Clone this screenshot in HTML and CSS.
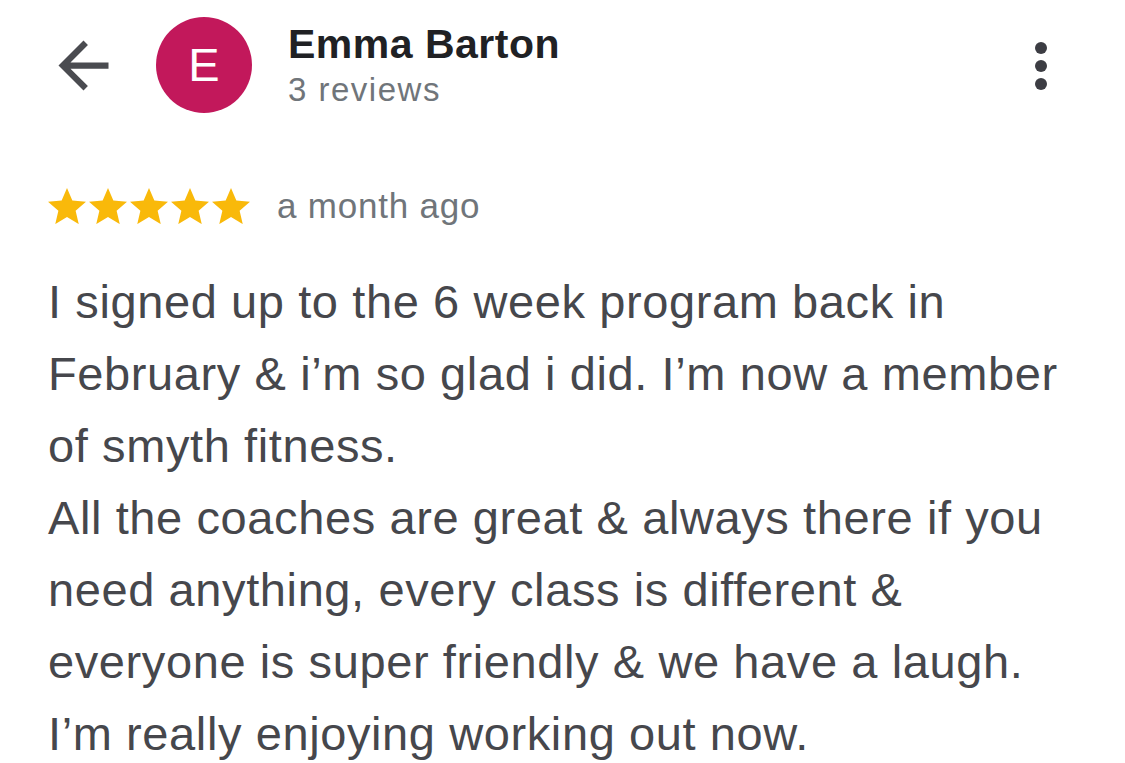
FILE: index.html
```html
<!DOCTYPE html>
<html lang="en">
<head>
<meta charset="utf-8">
<title>Emma Barton review</title>
<link rel="stylesheet" href="styles.css">
</head>
<body>
<main class="screen">
  <header class="header">
    <svg class="back" viewBox="0 0 24 24" aria-label="Back"><path d="M20 11H7.83l5.59-5.59L12 4l-8 8 8 8 1.41-1.41L7.83 13H20v-2z"/></svg>
    <div class="avatar">E</div>
    <div class="who">
      <div class="name">Emma Barton</div>
      <div class="count">3 reviews</div>
    </div>
    <div class="kebab" aria-label="More"><span></span><span></span><span></span></div>
  </header>
  <div class="meta">
    <div class="stars">
      <svg viewBox="2 2 20 19.27"><path d="M12 17.27L18.18 21l-1.64-7.03L22 9.24l-7.19-.61L12 2 9.19 8.63 2 9.24l5.46 4.73L5.82 21z"/></svg>
      <svg viewBox="2 2 20 19.27"><path d="M12 17.27L18.18 21l-1.64-7.03L22 9.24l-7.19-.61L12 2 9.19 8.63 2 9.24l5.46 4.73L5.82 21z"/></svg>
      <svg viewBox="2 2 20 19.27"><path d="M12 17.27L18.18 21l-1.64-7.03L22 9.24l-7.19-.61L12 2 9.19 8.63 2 9.24l5.46 4.73L5.82 21z"/></svg>
      <svg viewBox="2 2 20 19.27"><path d="M12 17.27L18.18 21l-1.64-7.03L22 9.24l-7.19-.61L12 2 9.19 8.63 2 9.24l5.46 4.73L5.82 21z"/></svg>
      <svg viewBox="2 2 20 19.27"><path d="M12 17.27L18.18 21l-1.64-7.03L22 9.24l-7.19-.61L12 2 9.19 8.63 2 9.24l5.46 4.73L5.82 21z"/></svg>
    </div>
    <span class="time">a month ago</span>
  </div>
  <p class="body">I signed up to the 6 week program back in February &amp; i’m so glad i did. I’m now a member of smyth fitness.<br>All the coaches are great &amp; always there if you need anything, every class is different &amp; everyone is super friendly &amp; we have a laugh. I’m really enjoying working out now.</p>
</main>
</body>
</html>
```

FILE: styles.css
```css
html, body {
  margin: 0;
  padding: 0;
  background: #ffffff;
}

body {
  font-family: "Liberation Sans", Arial, Helvetica, sans-serif;
  width: 1125px;
  height: 763px;
  overflow: hidden;
}

.screen {
  padding: 17px 78px 0 46px;
}

.header {
  display: flex;
  align-items: center;
  height: 96px;
}

.back {
  width: 75px;
  height: 75px;
  fill: #4a4b50;
  flex: none;
}

.avatar {
  width: 96px;
  height: 96px;
  margin-left: 35px;
  border-radius: 50%;
  background: #c2185b;
  color: #ffffff;
  font-size: 47px;
  line-height: 96px;
  text-align: center;
  flex: none;
}

.who {
  margin-left: 36px;
  display: flex;
  flex-direction: column;
  gap: 3px;
}

.name {
  font-size: 41px;
  line-height: 46px;
  font-weight: 700;
  color: #202124;
  letter-spacing: 0.5px;
}

.count {
  font-size: 33px;
  line-height: 40px;
  color: #70757a;
  letter-spacing: 1.5px;
}

.kebab {
  margin-left: auto;
  display: flex;
  flex-direction: column;
  gap: 6px;
  padding-top: 1px;
}

.kebab span {
  width: 12px;
  height: 12px;
  border-radius: 50%;
  background: #3c3d43;
}

.meta {
  display: flex;
  align-items: center;
  height: 40px;
  margin-top: 73px;
  padding-left: 2px;
}

.stars {
  display: flex;
  gap: 3px;
}

.stars svg {
  width: 38px;
  height: 36.6px;
  fill: #f9b90a;
}

.time {
  margin-left: 27px;
  font-size: 35px;
  line-height: 40px;
  color: #70757a;
  letter-spacing: 0.8px;
}

.body {
  margin: 40px 0 0 2px;
  width: 1040px;
  font-size: 47px;
  line-height: 72px;
  color: #46474c;
  letter-spacing: 0.6px;
}
```
